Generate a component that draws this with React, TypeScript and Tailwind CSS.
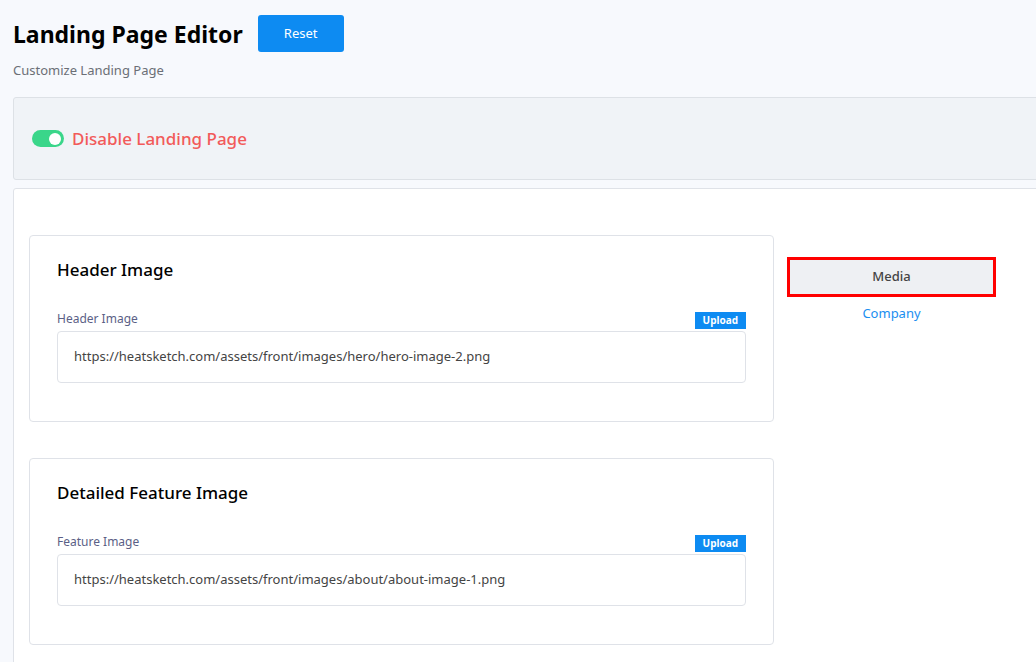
import { useState } from "react";

const font = { fontFamily: '"Noto Sans", "Open Sans", sans-serif' };

const ImageField = ({ title, label, value }: { title: string; label: string; value: string }) => {
	return (
		<div className="w-[745px] bg-white border border-[#dfe2e8] rounded-[4px] pt-[22px] pb-[38px] px-[27px]">
			<h3 className="text-[17px] font-medium text-black leading-[24px]">{title}</h3>
			<div className="mt-[29px] flex items-end justify-between">
				<span className="text-[12px] text-[#5b5f86] leading-[16px] mb-[4px]">{label}</span>
				<span className="bg-[#0d8bf2] text-white text-[10px] font-bold px-[8px] h-[17px] leading-[17px] mb-[2px]">Upload</span>
			</div>
			<div className="h-[52px] border border-[#dfe2e8] rounded-[4px] flex items-center px-[16px] text-[13px] text-[#444]">
				{value}
			</div>
		</div>
	);
};

const App = () => {
	const [enabled, setEnabled] = useState<boolean>(true);

	return (
		<div className="w-[1036px] h-[662px] overflow-hidden bg-[#f7f9fd]" style={font}>
			<div className="pl-[13px] pt-[15px] w-[1100px]">
				<div className="flex items-center gap-[15px]">
					<h1 className="text-[23px] font-bold text-black leading-[32px]">Landing Page Editor</h1>
					<button className="w-[86px] h-[37px] bg-[#0d8bf2] text-white text-[13px] rounded-[3px]">Reset</button>
				</div>
				<p className="mt-[9px] text-[13px] text-[#6b6f76] leading-[18px]">Customize Landing Page</p>

				<div className="mt-[18px] h-[83px] bg-[#f0f3f7] border border-[#dde1e6] rounded-[3px] flex items-center pl-[18px] gap-[8px]">
					<button
						onClick={() => setEnabled(!enabled)}
						className="w-[32px] h-[17px] rounded-full bg-[#3ad68a] flex items-center justify-end px-[3px]"
					>
						<span className="w-[12px] h-[12px] rounded-full bg-white" />
					</button>
					<span className="text-[17px] text-[#f25a5a] font-medium leading-[24px]">Disable Landing Page</span>
				</div>

				<div className="mt-[8px] bg-white border border-[#dfe2e8] rounded-[3px] pt-[46px] pl-[15px] pb-[20px] flex gap-[13px]">
					<div className="flex flex-col gap-[36px]">
						<ImageField
							title="Header Image"
							label="Header Image"
							value="https://heatsketch.com/assets/front/images/hero/hero-image-2.png"
						/>
						<ImageField
							title="Detailed Feature Image"
							label="Feature Image"
							value="https://heatsketch.com/assets/front/images/about/about-image-1.png"
						/>
					</div>
					<div className="pt-[22px] flex flex-col items-center w-[209px]">
						<button className="w-[209px] h-[40px] bg-[#eef0f3] border-[3px] border-[#ff0000] text-[13px] font-medium text-[#444]">
							Media
						</button>
						<a className="mt-[7px] text-[13px] text-[#1a8ef0]">Company</a>
					</div>
				</div>
			</div>
		</div>
	);
};

export default App;
